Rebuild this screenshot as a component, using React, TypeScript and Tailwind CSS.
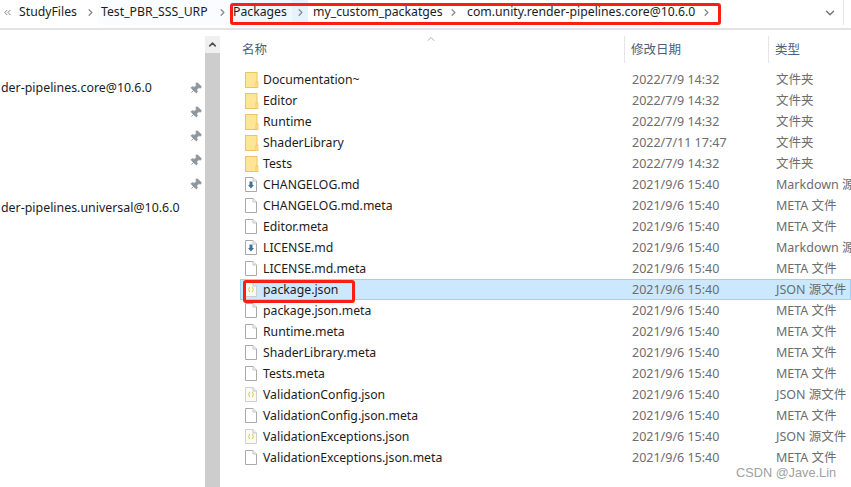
import { ChevronRight, ChevronUp, ChevronDown, ChevronsLeft, Pin } from "lucide-react";

const FONT = "font-['Noto_Sans','Noto_Sans_CJK_SC',sans-serif]";

type Kind = "folder" | "doc" | "md" | "json";

const FILES: { name: string; date: string; type: string; kind: Kind; selected?: boolean }[] = [
  { name: "Documentation~", date: "2022/7/9 14:32", type: "文件夹", kind: "folder" },
  { name: "Editor", date: "2022/7/9 14:32", type: "文件夹", kind: "folder" },
  { name: "Runtime", date: "2022/7/9 14:32", type: "文件夹", kind: "folder" },
  { name: "ShaderLibrary", date: "2022/7/11 17:47", type: "文件夹", kind: "folder" },
  { name: "Tests", date: "2022/7/9 14:32", type: "文件夹", kind: "folder" },
  { name: "CHANGELOG.md", date: "2021/9/6 15:40", type: "Markdown 源文件", kind: "md" },
  { name: "CHANGELOG.md.meta", date: "2021/9/6 15:40", type: "META 文件", kind: "doc" },
  { name: "Editor.meta", date: "2021/9/6 15:40", type: "META 文件", kind: "doc" },
  { name: "LICENSE.md", date: "2021/9/6 15:40", type: "Markdown 源文件", kind: "md" },
  { name: "LICENSE.md.meta", date: "2021/9/6 15:40", type: "META 文件", kind: "doc" },
  { name: "package.json", date: "2021/9/6 15:40", type: "JSON 源文件", kind: "json", selected: true },
  { name: "package.json.meta", date: "2021/9/6 15:40", type: "META 文件", kind: "doc" },
  { name: "Runtime.meta", date: "2021/9/6 15:40", type: "META 文件", kind: "doc" },
  { name: "ShaderLibrary.meta", date: "2021/9/6 15:40", type: "META 文件", kind: "doc" },
  { name: "Tests.meta", date: "2021/9/6 15:40", type: "META 文件", kind: "doc" },
  { name: "ValidationConfig.json", date: "2021/9/6 15:40", type: "JSON 源文件", kind: "json" },
  { name: "ValidationConfig.json.meta", date: "2021/9/6 15:40", type: "META 文件", kind: "doc" },
  { name: "ValidationExceptions.json", date: "2021/9/6 15:40", type: "JSON 源文件", kind: "json" },
  { name: "ValidationExceptions.json.meta", date: "2021/9/6 15:40", type: "META 文件", kind: "doc" },
];

const QUICK = [
  "der-pipelines.core@10.6.0",
  "",
  "",
  "",
  "",
  "der-pipelines.universal@10.6.0",
];

function FileIcon({ kind }: { kind: Kind }) {
  if (kind === "folder") {
    return (
      <svg width="14" height="16" viewBox="0 0 14 16" className="shrink-0">
        <rect x="0.5" y="0.5" width="11.5" height="15" fill="#ffe596" stroke="#e8c763" />
        <rect x="11" y="10" width="2" height="5.5" fill="#ffe596" stroke="#e8c763" strokeWidth="0.8" />
      </svg>
    );
  }
  return (
    <svg width="12" height="15" viewBox="0 0 12 15" className="shrink-0">
      <path
        d="M0.5 0.5H8L11.5 4V14.5H0.5Z"
        fill={kind === "json" ? "#fbfbf2" : "#fff"}
        stroke={kind === "json" ? "#cfcfcf" : "#a9a9a9"}
      />
      <path d="M8 0.5V4H11.5" fill="#f2f2f2" stroke="#c4c4c4" />
      {kind === "md" && <path d="M4.5 4.5H7.5V8H9L6 11.5L3 8H4.5Z" fill="#3f7299" />}
      {kind === "json" && (
        <path d="M5 5C3.8 5 4.4 7.5 3.6 7.5C4.4 7.5 3.8 10 5 10M7 5C8.2 5 7.6 7.5 8.4 7.5C7.6 7.5 8.2 10 7 10" fill="none" stroke="#cfc23f" />
      )}
    </svg>
  );
}

function Sep() {
  return <ChevronRight size={11} strokeWidth={3} className="text-[#8d8d8d] shrink-0" />;
}

export default function App() {
  return (
    <div className={`${FONT} relative w-[851px] h-[487px] overflow-hidden bg-white text-[12.5px] text-[#1c1c1c]`}>
      {/* Address bar */}
      <div className="flex items-center h-[30px] border-b-2 border-[#e3e3e3] pb-[3px] text-[12.25px]">
        <div className="flex items-center w-[98px] h-full pl-[2px] shrink-0">
          <ChevronsLeft size={11} strokeWidth={2} className="text-[#777] mr-[6px]" />
          <span>StudyFiles</span>
          <ChevronRight size={11} strokeWidth={3} className="text-[#8d8d8d] ml-[8px]" />
        </div>
        <div className="flex items-center h-full w-[134px] bg-[#fafdff] pl-[3px] shrink-0">
          <span>Test_PBR_SSS_URP</span>
          <ChevronRight size={11} strokeWidth={3} className="text-[#8d8d8d] ml-[9px]" />
        </div>
        <div className="flex items-center h-full w-[60px] bg-[#f0f8ff] pl-[1px] shrink-0">Packages</div>
        <div className="flex items-center justify-center h-full w-[16px] bg-[#e6f3ff] shrink-0">
          <Sep />
        </div>
        <div className="flex items-center h-full w-[159px] pl-[5px] shrink-0">
          <span>my_custom_packatges</span>
          <span className="ml-auto mr-[8px]"><Sep /></span>
        </div>
        <div className="flex items-center h-full shrink-0">
          <span>com.unity.render-pipelines.core@10.6.0</span>
          <ChevronRight size={11} strokeWidth={3} className="text-[#8d8d8d] ml-[6px]" />
        </div>
        <div className="ml-auto flex items-center h-full shrink-0">
          <ChevronDown size={14} strokeWidth={2.5} className="text-[#777] mr-[6px]" />
          <div className="w-px h-full bg-[#e6e6e6] mr-[7px]" />
        </div>
      </div>

      <div className="flex h-[457px]">
        {/* Quick access pane */}
        <div className="w-[205px] shrink-0 pt-[46px] pl-[1px] pr-[3px] flex flex-col text-[12.4px]">
          {QUICK.map((label, i) => (
            <div key={i} className="flex items-center h-[24px] overflow-hidden">
              <span className="whitespace-nowrap">{label}</span>
              {i < 5 && (
                <span className="ml-auto">
                  <Pin size={13} fill="#8f969c" strokeWidth={1.5} className="text-[#8f969c] rotate-45" />
                </span>
              )}
            </div>
          ))}
        </div>

        {/* Pane scrollbar */}
        <div className="w-[15px] shrink-0 mt-[6px] bg-[#f0f0f0] flex flex-col">
          <div className="h-[17px] flex items-center justify-center">
            <ChevronUp size={11} strokeWidth={3.5} className="text-[#505050]" />
          </div>
          <div className="flex-1 bg-[#cdcdcd]" />
        </div>

        {/* File list */}
        <div className="flex-1 min-w-0 pl-[20px]">
          <div className="flex h-[27px] mt-[6px] mb-[6px] text-[#4c607a]">
            <div className="w-[385px] pl-[2px] pt-[2px] flex items-center border-r border-[#e5e5e5]">名称</div>
            <div className="w-[144px] pl-[6px] pt-[2px] flex items-center border-r border-[#e5e5e5]">修改日期</div>
            <div className="pl-[6px] pt-[2px] flex items-center">类型</div>
          </div>
          {FILES.map((f) => (
            <div
              key={f.name}
              className={`flex items-center h-[21px] whitespace-nowrap border ${
                f.selected ? "bg-[#cce8ff] border-[#99d1ff]" : "border-transparent"
              }`}
            >
              <div className="w-[22px] pl-[4px] flex items-center shrink-0">
                <FileIcon kind={f.kind} />
              </div>
              <div className="w-[369px] shrink-0 pt-[2px] text-[12.25px]">{f.name}</div>
              <div className="w-[144px] shrink-0 pt-[2px] text-[#6d6d6d]">{f.date}</div>
              <div className="pt-[2px] text-[#6d6d6d]">{f.type}</div>
            </div>
          ))}
        </div>
      </div>

      {/* Sort caret */}
      <ChevronUp size={12} strokeWidth={1.2} className="absolute left-[425px] top-[33px] text-[#777]" />

      {/* Annotation boxes */}
      <div className="absolute left-[230px] top-[3px] w-[491px] h-[22px] border-[3px] border-[#fa1e14] rounded-[3px]" />
      <div className="absolute left-[243px] top-[280px] w-[112px] h-[23px] border-[3px] border-[#fa1e14] rounded-[3px]" />

      {/* Watermark */}
      <div className="absolute left-[736px] top-[463px] text-[12.75px] text-[#a0a0a0] font-['Liberation_Sans',sans-serif]">
        CSDN @Jave.Lin
      </div>
    </div>
  );
}
